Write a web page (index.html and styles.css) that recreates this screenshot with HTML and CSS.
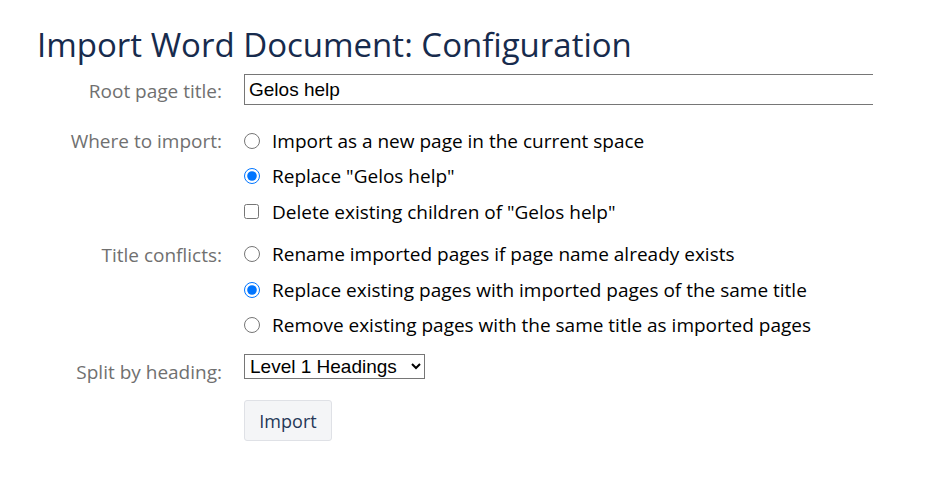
FILE: index.html
```html
<!DOCTYPE html>
<html lang="en">
<head>
    <meta charset="UTF-8">
    <title>Import Word Document: Configuration</title>
    <link rel="stylesheet" href="styles.css">
</head>
<body>
    <div class="page">
        <h1 class="page-title">Import Word Document: Configuration</h1>

        <form class="import-form">
            <div class="field-row input-row">
                <label class="field-label" for="rootTitle">Root page title:</label>
                <div class="field-control">
                    <div class="text-wrap">
                        <input class="text-input" id="rootTitle" type="text" value="Gelos help">
                    </div>
                </div>
            </div>

            <div class="field-row">
                <span class="field-label option-label">Where to import:</span>
                <div class="field-control">
                    <label class="option"><input type="radio" name="where"> Import as a new page in the current space</label>
                    <label class="option"><input type="radio" name="where" checked> Replace "Gelos help"</label>
                    <label class="option"><input type="checkbox" class="check"> Delete existing children of "Gelos help"</label>
                </div>
            </div>

            <div class="field-row">
                <span class="field-label option-label">Title conflicts:</span>
                <div class="field-control">
                    <label class="option"><input type="radio" name="conflict"> Rename imported pages if page name already exists</label>
                    <label class="option"><input type="radio" name="conflict" checked> Replace existing pages with imported pages of the same title</label>
                    <label class="option"><input type="radio" name="conflict"> Remove existing pages with the same title as imported pages</label>
                </div>
            </div>

            <div class="field-row select-row">
                <label class="field-label" for="split">Split by heading:</label>
                <div class="field-control">
                    <select class="heading-select" id="split">
                        <option>Level 1 Headings</option>
                        <option>Level 2 Headings</option>
                        <option>Don't split</option>
                    </select>
                </div>
            </div>

            <div class="field-row">
                <span class="field-label"></span>
                <div class="field-control">
                    <button type="button" class="btn">Import</button>
                </div>
            </div>
        </form>
    </div>
</body>
</html>
```

FILE: styles.css
```css
* {
    margin: 0;
    padding: 0;
    box-sizing: border-box;
}

body {
    font-family: "Open Sans", "Noto Sans", sans-serif;
    background: #ffffff;
    color: #172b4d;
}

.page {
    padding: 25px 0 0 37px;
}

.page-title {
    font-size: 33px;
    font-weight: 400;
    line-height: 40px;
    color: #172b4d;
    margin-bottom: 9px;
}

.field-row {
    display: grid;
    grid-template-columns: 185px 629px;
    column-gap: 22px;
    margin-bottom: 7px;
}

.input-row {
    margin-bottom: 18px;
}

.field-label {
    text-align: right;
    font-size: 19px;
    color: #707070;
    line-height: 31px;
    white-space: nowrap;
}

.input-row .field-label {
    line-height: 27px;
    padding-top: 4px;
}

.option-label {
    line-height: 36px;
}

.text-wrap {
    width: 629px;
    overflow: hidden;
}

.text-input {
    width: 660px;
    height: 31px;
    border: 1px solid #767676;
    padding: 0 4px;
    font-family: "Liberation Sans", Arial, sans-serif;
    font-size: 19px;
    color: #000;
}

.option {
    display: flex;
    align-items: center;
    height: 35.5px;
    font-size: 19px;
    color: #000;
    white-space: nowrap;
}

.option input {
    width: 16px;
    height: 16px;
    margin: 0 12px 0 0;
    accent-color: #0075ff;
}

.option .check {
    width: 15px;
    height: 15px;
    margin-right: 13px;
}

.select-row {
    padding-top: 4px;
    margin-bottom: 15px;
}

.select-row .field-label {
    line-height: 25px;
    padding-top: 6px;
}

.heading-select {
    height: 25px;
    width: 181px;
    font-family: "Liberation Sans", Arial, sans-serif;
    font-size: 19px;
    color: #000;
    border: 1px solid #767676;
    border-radius: 0;
    padding: 0 0 0 1px;
    background: #fff;
}

.btn {
    width: 88px;
    height: 41px;
    background: #f4f5f7;
    border: 1px solid #dfe1e6;
    border-radius: 3px;
    font-family: "Open Sans", "Noto Sans", sans-serif;
    font-size: 18px;
    color: #253858;
}
```
